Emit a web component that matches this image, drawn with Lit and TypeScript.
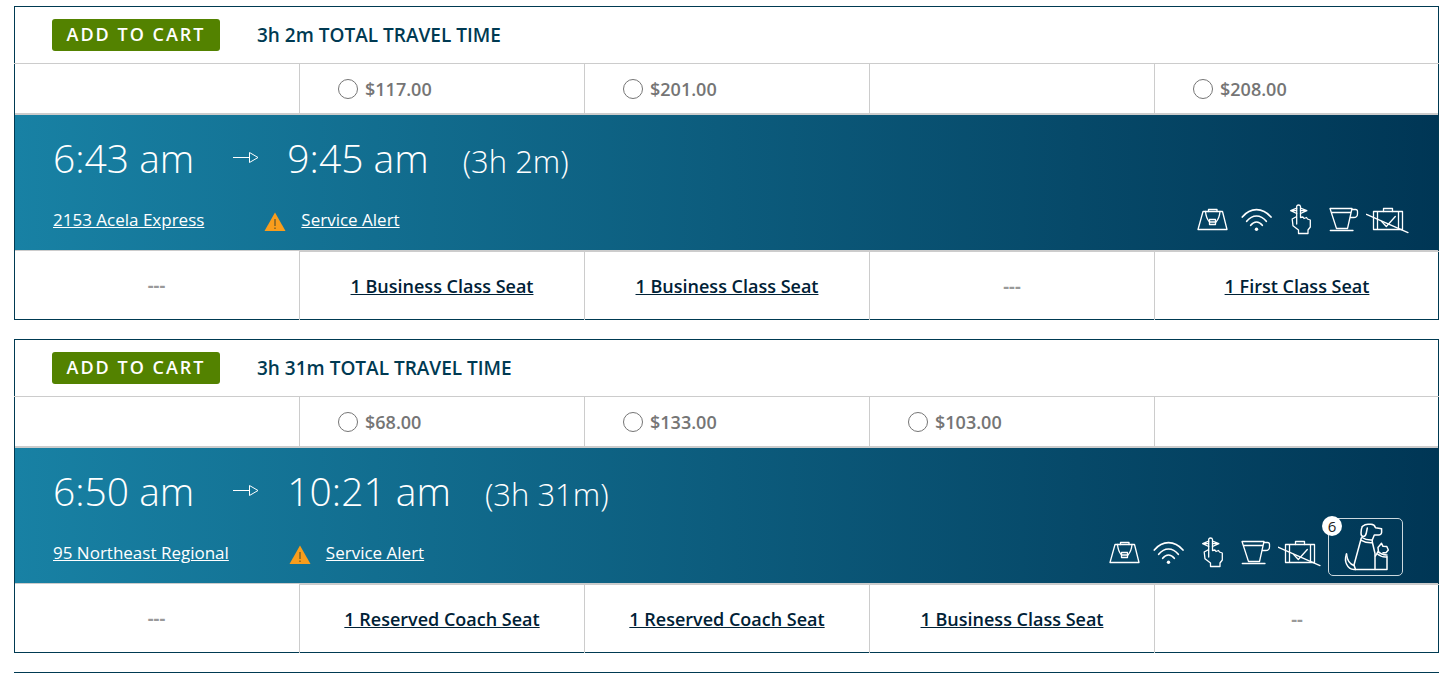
import { LitElement, html, css, svg, nothing } from "lit";
import { customElement, property } from "lit/decorators.js";

interface Fare {
  price?: string;
  seat?: string;
  empty?: string;
}

interface Trip {
  id: string;
  total: string;
  depart: string;
  arrive: string;
  duration: string;
  train: string;
  pets?: number;
  fares: Fare[];
}

const TRIPS: Trip[] = [
  {
    id: "2153",
    total: "3h 2m",
    depart: "6:43 am",
    arrive: "9:45 am",
    duration: "(3h 2m)",
    train: "2153 Acela Express",
    fares: [
      { empty: "---" },
      { price: "$117.00", seat: "1 Business Class Seat" },
      { price: "$201.00", seat: "1 Business Class Seat" },
      { empty: "---" },
      { price: "$208.00", seat: "1 First Class Seat" },
    ],
  },
  {
    id: "95",
    total: "3h 31m",
    depart: "6:50 am",
    arrive: "10:21 am",
    duration: "(3h 31m)",
    train: "95 Northeast Regional",
    pets: 6,
    fares: [
      { empty: "---" },
      { price: "$68.00", seat: "1 Reserved Coach Seat" },
      { price: "$133.00", seat: "1 Reserved Coach Seat" },
      { price: "$103.00", seat: "1 Business Class Seat" },
      { empty: "--" },
    ],
  },
];

const AMENITIES = [
  {
    name: "Carry-on baggage",
    shape: svg`
      <path d="M13 14.500h19.500l4.500 18h-29z"/>
      <path d="M18.500 14.500v-2h8.500v2"/>
      <path d="M15.500 14.500Q16 21 19.500 25M30 14.500Q29.500 21 26 25"/>
      <path d="M19.500 22.500h6v5h-6zM19.500 25h6"/>`,
  },
  {
    name: "Wi-Fi",
    shape: svg`
      <path class="bold" d="M8.300 20Q14.500 12.700 22.500 12.700T37 20"/>
      <path class="bold" d="M12.700 24.300Q17 19 22.500 19T32.300 24.300"/>
      <path class="bold" d="M16.700 28.300Q19.300 25 22.500 25T28.300 28.300"/>
      <circle class="solid" cx="22.500" cy="32.300" r="1.700"/>`,
  },
  {
    name: "Quiet car",
    shape: svg`
      <path d="M18.700 11.200L12.700 13.700L18.700 16.500M22.500 11.200L28.800 13.700L22.500 16.500M13 13.700h5.500M22.500 13.700h6"/>
      <path d="M18.700 27V9.500Q18.700 8 20.500 8T22.500 9.500V20.500L25 20L26 21.500L28.500 20.500L29.500 22L32.300 23V30L30 33V36.500H20.500V33L15 28.800L14.200 22L18.700 19.500"/>`,
  },
  {
    name: "Café",
    shape: svg`
      <path d="M8 11.500H30L25.500 31.500H14.500L8 11.500zM9.500 15.500H29"/>
      <path d="M30 12.500H33.500Q35.500 12.500 35.500 14.500V17Q35.500 20.500 31.500 20.500H28.500"/>
      <path d="M8.300 33.500H31"/>`,
  },
  {
    name: "No checked baggage",
    shape: svg`
      <path d="M7.500 14.500H36.500V32.500H7.500zM11.500 14.500V32.500M32.500 14.500V32.500"/>
      <path d="M17.500 14.500V11.500H26.500V14.500"/>
      <path d="M15.700 24.500L20.300 29.500L29.300 19.500"/>
      <path d="M0.500 17.300L42 35.600"/>`,
  },
];

const petsIcon = html`
  <svg class="pets-icon" viewBox="0 0 75 58" aria-hidden="true">
    <path d="M34.300 8.500Q37 6.300 40 6.300H43Q46.500 6.500 47.500 9.800L53.600 10.800V14.500Q53.300 17 50.500 17H46.300L44.300 22V24L47 35.500V51.500" />
    <path d="M34.300 8.500Q33 11 33 15Q33 18.600 35.300 18.600Q37.600 18.400 38.300 15L39.300 10" />
    <path d="M34 19.500Q38 22.300 44 22M33.300 22.300Q38 25 44 24.700" />
    <path d="M33.300 20L26 47L27.500 51.500" />
    <path d="M18.500 36Q16.500 42 18.500 46Q21 51.500 26 51.500H59V38.500" />
    <path d="M18.500 36Q19.500 45.500 26 47.500" />
    <path d="M50.500 34L50 29.500L53.500 25.300L55 28.300L58.800 28.500L60.300 32L58 34.800H55" />
    <path d="M50 33.500Q54 37.300 59 37M49.300 35.800Q53 39.300 58.500 39M50 33.500L47.500 38" />
  </svg>
`;

@customElement("trip-card")
export class TripCard extends LitElement {
  @property({ attribute: false }) trip!: Trip;

  static styles = css`
    :host {
      display: block;
      border: 1px solid #003a52;
      background: #fff;
    }
    a {
      color: inherit;
      text-decoration: underline;
    }
    .header {
      display: flex;
      align-items: center;
      gap: 37px;
      height: 56px;
      padding: 0 37px;
    }
    .add {
      width: 168px;
      height: 32px;
      padding: 0 0 2px;
      border: 0;
      border-radius: 3px;
      background: #538200;
      color: #fff;
      font: 600 18px/24px "Open Sans", sans-serif;
      letter-spacing: 2px;
    }
    .total {
      margin: 0;
      color: #003a52;
      font-size: 19px;
      line-height: 24px;
      font-weight: 600;
    }
    .row {
      display: grid;
      grid-template-columns: repeat(5, 1fr);
      margin: 0 -1px;
    }
    .prices {
      border-top: 1px solid #ccc;
    }
    .price {
      display: flex;
      align-items: center;
      gap: 7px;
      height: 49px;
      padding-left: 38px;
      color: #757575;
      font-size: 18px;
      line-height: 24px;
      font-weight: 600;
    }
    .price + .price,
    .seat + .seat {
      border-left: 1px solid #ccc;
    }
    .radio {
      appearance: none;
      box-sizing: border-box;
      width: 20px;
      height: 20px;
      margin: 0;
      border: 1px solid #757575;
      border-radius: 50%;
      background: #fff;
    }
    .radio:checked {
      border: 6px solid #00537e;
    }
    .band {
      display: flex;
      justify-content: space-between;
      align-items: flex-end;
      border-top: 2px solid #ccc;
      border-bottom: 1px solid #ccc;
      background: linear-gradient(to right, #1881a4, #003655);
      color: #fff;
    }
    .journey {
      display: grid;
      gap: 23px;
      padding: 16px 0 18px 38px;
    }
    .times {
      display: flex;
      align-items: baseline;
      font-weight: 300;
      font-size: 39px;
      line-height: 54px;
    }
    .arrow {
      width: 26px;
      height: 12px;
      margin: 0 28px 2px 39px;
      align-self: center;
      fill: none;
      stroke: #fff;
    }
    .duration {
      margin-left: 34px;
      font-size: 31px;
      line-height: 40px;
    }
    .details {
      display: flex;
      align-items: center;
      font-size: 17px;
      line-height: 24px;
    }
    .warning {
      width: 22px;
      height: 20px;
      margin: 4px 15px 0 60px;
    }
    .amenities {
      display: flex;
      align-items: flex-end;
      padding: 0 28px 7px 0;
    }
    .amenity {
      width: 44px;
      height: 46px;
    }
    .amenity,
    .pets-icon {
      display: block;
      fill: none;
      stroke: #fff;
      stroke-width: 1.3px;
      stroke-linejoin: round;
      stroke-linecap: round;
    }
    .bold {
      stroke-width: 1.7px;
    }
    .solid {
      fill: #fff;
      stroke: none;
    }
    .pets {
      position: relative;
      box-sizing: border-box;
      width: 75px;
      height: 58px;
      margin: 0 7px 0 6px;
      padding: 0;
      border: 1px solid #ccd8de;
      border-radius: 5px;
      background: none;
    }
    .pets-icon {
      width: 75px;
      height: 58px;
      margin: -1px;
      stroke-width: 1.5px;
    }
    .count {
      position: absolute;
      top: -3px;
      left: -7px;
      width: 20px;
      height: 20px;
      border-radius: 50%;
      background: #fff;
      color: #222;
      font: 400 15px/20px "Open Sans", sans-serif;
      text-align: center;
    }
    .seats {
      margin-bottom: -1px;
    }
    .seat {
      box-sizing: border-box;
      height: 69px;
      padding-top: 22px;
      text-align: center;
      color: #002136;
      font-size: 18px;
      line-height: 24px;
      font-weight: 600;
    }
    .seat + .seat {
      border-top: 1px solid #ccc;
    }
    .none {
      color: #999;
      font-weight: 700;
    }
  `;

  render() {
    const t = this.trip;
    return html`
      <div class="header">
        <button class="add" type="button">ADD TO CART</button>
        <h2 class="total">${t.total} TOTAL TRAVEL TIME</h2>
      </div>
      <div class="row prices">
        ${t.fares.map((f) =>
          f.price
            ? html`<label class="price">
                <input class="radio" type="radio" name="fare-${t.id}" />${f.price}
              </label>`
            : html`<div class="price"></div>`
        )}
      </div>
      <div class="band">
        <div class="journey">
          <div class="times">
            <span>${t.depart}</span>
            <svg class="arrow" viewBox="0 0 26 12" aria-hidden="true">
              <path d="M0 6.500H16.500M16.500 1.500V11.500L25 6.500z" />
            </svg>
            <span>${t.arrive}</span>
            <span class="duration">${t.duration}</span>
          </div>
          <div class="details">
            <a href="#train">${t.train}</a>
            <svg class="warning" viewBox="0 0 22 20" aria-hidden="true">
              <path d="M11 0.500L21.500 19H0.500z" fill="#f99d1c" />
              <path d="M11 7V14M11 15.500V17" stroke="#6b5a2a" stroke-width="1.300" />
            </svg>
            <a href="#alert">Service Alert</a>
          </div>
        </div>
        <div class="amenities">
          ${AMENITIES.map(
            (a) => html`<svg class="amenity" viewBox="0 0 44 46" role="img" aria-label=${a.name}>
              ${a.shape}
            </svg>`
          )}
          ${t.pets
            ? html`<button class="pets" type="button" aria-label="Pets, ${t.pets} available">
                ${petsIcon}<span class="count">${t.pets}</span>
              </button>`
            : nothing}
        </div>
      </div>
      <div class="row seats">
        ${t.fares.map((f) =>
          f.seat
            ? html`<div class="seat"><a href="#seat">${f.seat}</a></div>`
            : html`<div class="seat"><span class="none">${f.empty}</span></div>`
        )}
      </div>
    `;
  }
}

@customElement("app-root")
export class AppRoot extends LitElement {
  static styles = css`
    :host {
      display: block;
      box-sizing: border-box;
      height: 100vh;
      overflow: hidden;
      padding: 6px 14px 0;
      background: #fff;
      font-family: "Open Sans", sans-serif;
    }
    .list {
      display: grid;
      gap: 19px;
    }
    .next {
      height: 56px;
      border: 1px solid #003a52;
    }
  `;

  render() {
    return html`
      <main class="list">
        ${TRIPS.map((t) => html`<trip-card .trip=${t}></trip-card>`)}
        <div class="next"></div>
      </main>
    `;
  }
}
